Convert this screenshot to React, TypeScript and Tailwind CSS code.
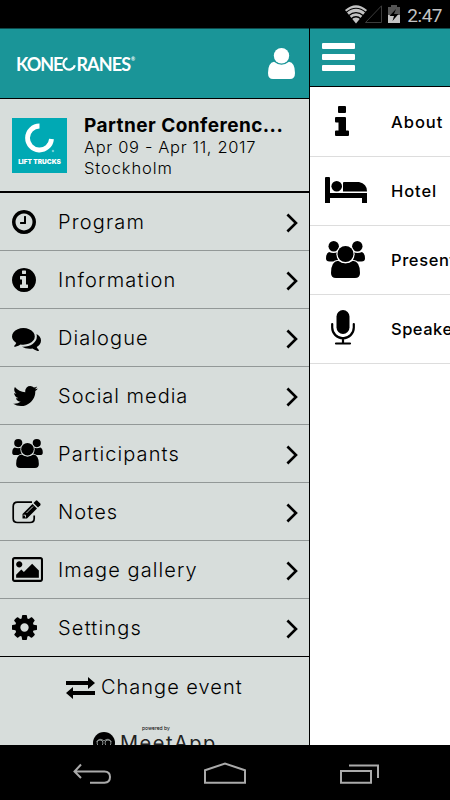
import React from "react";

//types
type IconProps = { className?: string };

type MenuItem = {
    label: string;
    icon: React.ReactNode;
    spacing: string;
};

//icons
const ClockIcon: React.FC<IconProps> = ({ className }) => (
    <svg viewBox="128 128 1536 1536" className={className} fill="currentColor">
        <path d="M1024 544v448q0 14-9 23t-23 9h-320q-14 0-23-9t-9-23v-64q0-14 9-23t23-9h224v-352q0-14 9-23t23-9h64q14 0 23 9t9 23zm416 352q0-148-73-273t-198-198-273-73-273 73-198 198-73 273 73 273 198 198 273 73 273-73 198-198 73-273zm224 0q0 209-103 385.5t-279.5 279.5-385.5 103-385.5-103-279.5-279.5-103-385.5 103-385.5 279.5-279.5 385.5-103 385.5 103 279.5 279.5 103 385.5z" />
    </svg>
);

const InfoCircleIcon: React.FC<IconProps> = ({ className }) => (
    <svg viewBox="128 128 1536 1536" className={className} fill="currentColor">
        <path d="M1152 1376v-160q0-14-9-23t-23-9h-96v-512q0-14-9-23t-23-9h-320q-14 0-23 9t-9 23v160q0 14 9 23t23 9h96v320h-96q-14 0-23 9t-9 23v160q0 14 9 23t23 9h448q14 0 23-9t9-23zm-128-896v-160q0-14-9-23t-23-9h-192q-14 0-23 9t-9 23v160q0 14 9 23t23 9h192q14 0 23-9t9-23zm640 416q0 209-103 385.5t-279.5 279.5-385.5 103-385.5-103-279.5-279.5-103-385.5 103-385.5 279.5-279.5 385.5-103 385.5 103 279.5 279.5 103 385.5z" />
    </svg>
);

const CommentsIcon: React.FC<IconProps> = ({ className }) => (
    <svg viewBox="0 256 1792 1408" className={className} fill="currentColor">
        <path d="M1408 768q0 139-94 257t-256.5 186.5-353.5 68.5q-86 0-176-16-124 88-278 128-36 9-86 16h-3q-11 0-20.5-8t-11.5-21q-1-3-1-6.5t.5-6.5 2-6l2.500-5 3.500-5.500 4-5 4.500-5 4-4.500q5-6 23-25t26-29.500 22.500-29 25-38.500 20.500-44q-124-72-195-177t-71-224q0-139 94-257t256.500-186.500 353.500-68.500 353.500 68.500 256.500 186.500 94 257zm384 256q0 120-71 224.500t-195 176.500q10 24 20.500 44t25 38.500 22.500 29 26 29.500 23 25q1 1 4 4.500t4.500 5 4 5 3.500 5.500l2.500 5 2 6 .5 6.500-1 6.500q-3 14-13 22t-22 7q-50-7-86-16-154-40-278-128-90 16-176 16-271 0-472-132 58 4 88 4 161 0 309-45t264-129q125-92 192-212t67-254q0-77-23-152 129 71 204 178t75 230z" />
    </svg>
);

const TwitterIcon: React.FC<IconProps> = ({ className }) => (
    <svg viewBox="108 256 1576 1280" className={className} fill="currentColor">
        <path d="M1684 408q-67 98-162 167 1 14 1 42 0 130-38 259.5t-115.5 248.5-184.5 210.5-258 146-323 54.5q-271 0-496-145 35 4 78 4 225 0 401-138-105-2-188-64.5t-114-159.5q33 5 61 5 43 0 85-11-112-23-185.5-111.5t-73.5-205.5v-4q68 38 146 41-66-44-105-115t-39-154q0-88 44-163 121 149 294.5 238.5t371.5 99.5q-8-38-8-74 0-134 94.5-228.5t228.5-94.5q140 0 236 102 109-21 205-78-37 115-142 178 93-10 186-50z" />
    </svg>
);

// the front person is outlined in the row's background colour
const PeopleIcon: React.FC<IconProps & { outline: string }> = ({ className, outline }) => (
    <svg viewBox="0 0 39 37" className={className} fill="currentColor">
        <circle cx="7.7" cy="5.2" r="5.2" />
        <circle cx="31.3" cy="5.2" r="5.2" />
        <path d="M3 10.9q4.500 2 9 0V20.500H3.500Q0 20.500 0 17.500 0 12 3 10.900Z" />
        <path d="M36 10.900q-4.500 2-9 0V20.500h8.500q3.500 0 3.500-3 0-5.500-3-6.600Z" />
        <path
            d="M12 19.800q7.500 5 15 0Q34 20.500 34 32q0 5-5 5H10q-5 0-5-5 0-11.500 7-12.200Z"
            className={outline}
            strokeWidth="2"
            paintOrder="stroke"
        />
        <circle cx="19.500" cy="13" r="8" className={outline} strokeWidth="2.400" paintOrder="stroke" />
    </svg>
);

const NotesIcon: React.FC<IconProps> = ({ className }) => (
    <svg viewBox="0 0 29 24" className={className} fill="none">
        <path
            d="M20 2.200H5.500Q1.200 2.200 1.200 6.500v12Q1.200 22.500 5.500 22.500H18q4.200 0 4.200-4V15.500"
            stroke="currentColor"
            strokeWidth="1.700"
        />
        <path d="M10.500 14 20.500 4l4.500 4.500-10 10h-4.500Z" fill="currentColor" />
        <path d="m21.500 3 2.300-2.300q.8-.7 1.600 0L28.300 3.600q.7.800 0 1.600L26 7.500Z" fill="currentColor" />
        <path d="m14.500 13 6.500-6.500M11.500 15.200h2v2.200" stroke="#d7dddb" strokeWidth=".9" />
    </svg>
);

const ImageIcon: React.FC<IconProps> = ({ className }) => (
    <svg viewBox="-64 128 1920 1536" className={className} fill="currentColor">
        <path d="M576 576q0 80-56 136t-136 56-136-56-56-136 56-136 136-56 136 56 56 136zm1024 384v448h-1408v-192l320-320 160 160 512-512zm96-704h-1600q-13 0-22.500 9.500t-9.500 22.500v1216q0 13 9.500 22.500t22.500 9.500h1600q13 0 22.500-9.500t9.500-22.500v-1216q0-13-9.500-22.500t-22.500-9.500zm160 32v1216q0 66-47 113t-113 47h-1600q-66 0-113-47t-47-113v-1216q0-66 47-113t113-47h1600q66 0 113 47t47 113z" />
    </svg>
);

const CogIcon: React.FC<IconProps> = ({ className }) => (
    <svg viewBox="128 128 1536 1536" className={className} fill="currentColor">
        <path d="M1152 896q0-106-75-181t-181-75-181 75-75 181 75 181 181 75 181-75 75-181zm512-109v222q0 12-8 23t-20 13l-185 28q-19 54-39 91 35 50 107 138 10 12 10 25t-9 23q-27 37-99 108t-94 71q-12 0-26-9l-138-108q-44 23-91 38-16 136-29 186-7 28-36 28h-222q-14 0-24.500-8.500t-11.500-21.500l-28-184q-49-16-90-37l-141 107q-10 9-25 9-14 0-25-11-126-114-165-168-7-10-7-23 0-12 8-23 15-21 51-66.500t54-70.500q-27-50-41-99l-183-27q-13-2-21-12.500t-8-23.500v-222q0-12 8-23t19-13l186-28q14-46 39-92-40-57-107-138-10-12-10-24 0-10 9-23 26-36 98.500-107.500t94.500-71.500q13 0 26 10l138 107q44-23 91-38 16-136 29-186 7-28 36-28h222q14 0 24.500 8.500t11.500 21.500l28 184q49 16 90 37l142-107q9-9 24-9 13 0 25 10 129 119 165 170 7 8 7 22 0 12-8 23-15 21-51 66.500t-54 70.500q26 50 41 98l183 28q13 2 21 12.500t8 23.500z" />
    </svg>
);

const InfoIcon: React.FC<IconProps> = ({ className }) => (
    <svg viewBox="0 0 14 30" className={className} fill="currentColor">
        <rect x="3" width="8" height="7" rx="1" />
        <path d="M1 11h9q1 0 1 1v12.500h2q1 0 1 1V29q0 1-1 1H1q-1 0-1-1v-3.500q0-1 1-1h2.500v-8H1q-1 0-1-1V12q0-1 1-1Z" />
    </svg>
);

const BedIcon: React.FC<IconProps> = ({ className }) => (
    <svg viewBox="0 0 42 26" className={className} fill="currentColor">
        <path d="M1 0h3q1 0 1 1v15h37v10h-5v-5H5v5H0V1q0-1 1-1Z" />
        <circle cx="11.700" cy="9.200" r="5.300" />
        <path d="M19 5h15q8 1.500 8 9.500H18V6q0-1 1-1Z" />
    </svg>
);

const MicIcon: React.FC<IconProps> = ({ className }) => (
    <svg viewBox="0 0 24 35" className={className}>
        <rect x="5.500" width="13" height="24" rx="6.500" fill="currentColor" />
        <path
            d="M1.200 14v3.500a10.800 10.800 0 0 0 21.600 0V14M12 28v5.500M5 33.500h14"
            fill="none"
            stroke="currentColor"
            strokeWidth="2.200"
            strokeLinecap="round"
        />
    </svg>
);

const ChevronIcon: React.FC = () => (
    <svg viewBox="0 0 12 20" className="mt-[3px] h-5 w-3" fill="none">
        <path d="m1.400 1.500 8.600 8.500-8.600 8.500" stroke="black" strokeWidth="2.600" />
    </svg>
);

const menuItems: MenuItem[] = [
    { label: "Program", spacing: "tracking-[1.15px]", icon: <ClockIcon className="size-6" /> },
    { label: "Information", spacing: "tracking-[1.2px]", icon: <InfoCircleIcon className="size-6" /> },
    { label: "Dialogue", spacing: "tracking-[1.1px]", icon: <CommentsIcon className="mt-[3px] h-[23px] w-[29px]" /> },
    { label: "Social media", spacing: "tracking-[1px]", icon: <TwitterIcon className="ml-px h-5 w-[25px]" /> },
    {
        label: "Participants",
        spacing: "tracking-[1.1px]",
        icon: <PeopleIcon className="h-[29px] w-[31px]" outline="stroke-[#d7dddb]" />,
    },
    { label: "Notes", spacing: "tracking-[1.1px]", icon: <NotesIcon className="h-6 w-[29px]" /> },
    { label: "Image gallery", spacing: "tracking-[1.1px]", icon: <ImageIcon className="h-[25px] w-[31px]" /> },
    { label: "Settings", spacing: "tracking-[1.2px]", icon: <CogIcon className="size-[25px]" /> },
];

const pageItems: MenuItem[] = [
    { label: "About", spacing: "tracking-[1px]", icon: <InfoIcon className="mb-[3px] ml-[25px] h-[30px] w-[14px]" /> },
    { label: "Hotel", spacing: "tracking-[0.9px]", icon: <BedIcon className="mb-[2px] ml-[15px] h-[26px] w-[42px]" /> },
    {
        label: "Presentations",
        spacing: "tracking-[0.6px]",
        icon: <PeopleIcon className="mb-px ml-4 h-[37px] w-[39px]" outline="stroke-white" />,
    },
    { label: "Speakers", spacing: "tracking-[0.5px]", icon: <MicIcon className="mb-1 ml-[21px] h-[35px] w-6" /> },
];

const StatusBar: React.FC = () => (
    <div className="flex h-7 shrink-0 items-center justify-end bg-black pr-2 text-[#c3c3c3]">
        <svg viewBox="0 0 56 19" className="mt-px mr-1.5 h-[19px] w-14">
            <path d="M0 5q11-9.500 22 0L11 18.500Z" fill="#c3c3c3" />
            <path
                d="M1 7.500q10-8.500 20 0M3.500 10.800q7.500-6.500 15 0M6 14q5-4.500 10 0"
                fill="none"
                stroke="black"
                strokeWidth="1.200"
            />
            <path d="M20.500 17.500 36.500 .8v16.700Z" fill="none" stroke="#3c3c3c" />
            <path d="M46 0h6v2h3v8H43V2h3Z" fill="#555" />
            <path d="M43 10h12v8H43Z" fill="#c3c3c3" />
            <path d="m51 4-6.500 7H49l-1.500 5 6-7H49Z" fill="black" />
        </svg>
        <span className="mt-1 font-[Roboto,sans-serif] text-[19px] leading-6 tracking-[-0.5px]">2:47</span>
    </div>
);

const Logo: React.FC = () => (
    <div className="flex items-center font-[Lato,sans-serif] text-[18px] leading-5 font-bold text-white">
        <span className="tracking-[-1px]">KONE</span>
        <svg viewBox="0 0 14 14" className="h-[14px] w-[14px]" fill="none">
            <path d="M5.500 1.200a5.800 5.800 0 1 0 7.300 7" stroke="white" strokeWidth="2.200" />
        </svg>
        <span className="tracking-[-0.9px]">RANES</span>
        <span className="mb-2 ml-px text-[5px] leading-none">®</span>
    </div>
);

const EventCard: React.FC = () => (
    <div className="flex h-[94px] shrink-0 border-b-2 border-black pt-[19px] pl-3">
        <div className="flex h-[55px] w-[55px] flex-col items-center bg-[#00a9b4] text-white">
            <svg viewBox="0 0 30 30" className="mt-[5px] h-[30px] w-[30px]" fill="none">
                <path d="M14.500 3a12 12 0 1 0 12 13" stroke="white" strokeWidth="4.800" />
                <circle cx="28" cy="28" r=".8" stroke="white" strokeWidth=".5" />
            </svg>
            <span className="mt-[5px] text-[6.5px] leading-[9px] font-black">LIFT TRUCKS</span>
        </div>
        <div className="-mt-[3px] ml-[17px]">
            <h2 className="text-[19px] leading-[21px] font-bold tracking-[0.45px]">Partner Conferenc...</h2>
            <p className="text-[16.5px] leading-[22px] font-[350] tracking-[0.65px]">Apr 09 - Apr 11, 2017</p>
            <p className="-mt-px text-[16.5px] leading-[22px] font-[350] tracking-[0.9px]">Stockholm</p>
        </div>
    </div>
);

const NavBar: React.FC = () => (
    <div className="flex h-[55px] shrink-0 items-start bg-black">
        <svg viewBox="0 0 450 55" className="h-[55px] w-[450px]" fill="none" stroke="#aaa" strokeWidth="2">
            <path d="M81 19.500 74.500 26.500 81 33M75 26.500h29.500q5.500 0 5.500 5.500t-5.500 5.700H90" />
            <path d="M205 37.700V25.300L225 18.500l20 6.800v12.400Z" />
            <path d="M341 26h30v11.700h-30ZM349 20.500h29V33" />
        </svg>
    </div>
);

export default function App() {
    return (
        <div className="flex h-[800px] w-[450px] flex-col overflow-hidden font-[Inter,sans-serif] text-black">
            <StatusBar />
            <div className="flex min-h-0 flex-1">
                {/* Side menu */}
                <aside className="flex w-[310px] shrink-0 flex-col overflow-hidden border-r border-black bg-[#d7dddb]">
                    <header className="flex h-[71px] shrink-0 items-center justify-between border-t border-b border-t-[#0d4b4c] border-b-black bg-[#1a9598] pr-[14px] pl-4">
                        <Logo />
                        <svg viewBox="0 0 27 31" className="h-[31px] w-[27px]" fill="white">
                            <circle cx="13.500" cy="7.800" r="7.700" />
                            <path d="M6 13.800q7.500 6 15 0 6 1 6 11.200 0 6-5 6H5q-5 0-5-6 0-10.200 6-11.200Z" />
                        </svg>
                    </header>
                    <EventCard />
                    <nav className="shrink-0">
                        {menuItems.map((item) => (
                            <div
                                key={item.label}
                                className="flex h-[58px] items-center border-b border-[#929897] pr-[11px] pl-3 last:border-black"
                            >
                                <div className="w-[46px]">{item.icon}</div>
                                <span className={`flex-1 text-[20px] leading-6 font-[350] ${item.spacing}`}>
                                    {item.label}
                                </span>
                                <ChevronIcon />
                            </div>
                        ))}
                    </nav>
                    <div className="mt-[18px] flex h-6 shrink-0 items-center pl-[66px]">
                        <svg viewBox="0 0 29 22" className="mt-0.5 mr-[6px] h-[22px] w-[29px]" fill="black">
                            <path d="M0 4h22V0l7 6-7 6V8H0ZM29 14H7v-4l-7 6 7 6v-4h22Z" />
                        </svg>
                        <span className="text-[20px] font-[350] tracking-[1px]">Change event</span>
                    </div>
                    <div className="mt-[26px] flex shrink-0 items-start pl-[93px]">
                        <svg viewBox="0 0 22 22" className="mt-[7px] size-[22px]" fill="none">
                            <circle cx="11" cy="11" r="11" fill="black" />
                            <path d="M3.500 10q3-5 7.500-1 4.500-4 7.500 1" stroke="#8b908f" />
                            <circle cx="7" cy="11" r="3" stroke="#8b908f" />
                            <circle cx="15" cy="11" r="3" stroke="#8b908f" />
                        </svg>
                        <div className="ml-[5px] flex flex-col">
                            <span className="pl-[22px] text-[5px] leading-[6px]">powered by</span>
                            <span className="text-[20px] leading-[24px] text-[#222] tracking-[1.5px]">MeetApp</span>
                        </div>
                    </div>
                </aside>

                {/* Page behind the menu */}
                <main className="min-w-0 flex-1 overflow-hidden bg-white">
                    <header className="mb-px h-[59px] border-t border-b border-t-[#0d4b4c] border-b-black bg-[#1a9598] pt-[14px] pl-3">
                        <div className="flex w-[33px] flex-col gap-[5px]">
                            <div className="h-[6px] rounded-[1px] bg-white" />
                            <div className="h-[6px] rounded-[1px] bg-white" />
                            <div className="h-[6px] rounded-[1px] bg-white" />
                        </div>
                    </header>
                    {pageItems.map((item) => (
                        <div key={item.label} className="flex h-[69px] items-center border-b border-[#ddd]">
                            <div className="w-[81px] shrink-0">{item.icon}</div>
                            <span className={`text-[16.5px] whitespace-nowrap font-medium ${item.spacing}`}>
                                {item.label}
                            </span>
                        </div>
                    ))}
                </main>
            </div>
            <NavBar />
        </div>
    );
}
